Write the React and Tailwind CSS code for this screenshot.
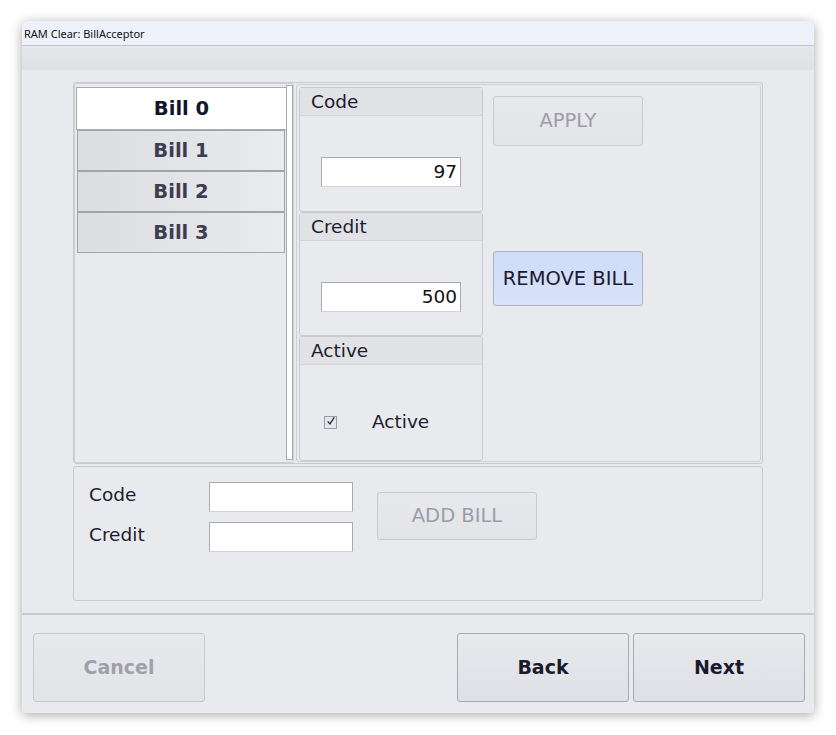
import React from "react";

const F = { fontFamily: '"DejaVu Sans", Verdana, sans-serif' };

function Group({ title, children }) {
  return (
    <div className="h-[125px] w-[184px] rounded-[3px] border border-[#c9cace] bg-[#e9eaee] flex flex-col">
      <div className="h-[28px] bg-[#e1e2e6] border-b border-[#d4d5d9] pl-[11px] text-[18.5px] leading-[28px] text-[#1c1c2e]">{title}</div>
      <div className="flex-1 relative">{children}</div>
    </div>
  );
}

function BillItem({ label, active }) {
  if (active) {
    return (
      <div className="h-[43px] bg-white border-l border-t border-b border-[#a9aaaf] flex items-center justify-center text-[19.5px] font-bold text-[#14142a]">{label}</div>
    );
  }
  return (
    <div className="mx-[1px] h-[41px] border border-[#a3a4aa] bg-gradient-to-r from-[#dcdde1] to-[#eaebee] flex items-center justify-center text-[19.5px] font-bold text-[#3d3d50]">{label}</div>
  );
}

export default function App() {
  return (
    <div className="w-[836px] h-[735px] bg-white pt-[21px] pl-[22px]" style={F}>
      <div className="w-[792px] h-[692px] rounded-t-[6px] rounded-b-[3px] bg-[#e9eaee] shadow-[0_2px_12px_rgba(0,0,0,0.35)] flex flex-col overflow-hidden">
        <div className="h-[25px] shrink-0 bg-[#eef1f9] border-b border-[#c3c5ca] pl-[2px] text-[11px] leading-[25px] text-[#111]" style={{ fontFamily: '"Noto Sans", "Open Sans", sans-serif' }}>
          RAM Clear: BillAcceptor
        </div>
        <div className="h-[24px] shrink-0 bg-gradient-to-b from-[#e6e7eb] to-[#e0e1e5]" />
        <div className="flex-1 flex flex-col pl-[51px] pt-[12px]">
          <div className="w-[690px] h-[382px] rounded-[3px] border border-[#c9cace] flex">
            <div className="w-[220px] h-[380px] rounded-[2px] border border-[#cfd0d4] flex pt-[3px] pb-[2px]">
              <div className="w-[211px] flex flex-col pl-[1px]">
                <BillItem label="Bill 0" active />
                <BillItem label="Bill 1" />
                <BillItem label="Bill 2" />
                <BillItem label="Bill 3" />
              </div>
              <div className="w-[7px] -mt-[2px] bg-white border border-[#a9aaaf]" />
            </div>
            <div className="ml-[2px] flex-1 mt-[1px] mb-[1px] mr-[1px] rounded-[3px] border border-[#cfd0d4] flex pl-[2px] pt-[2px] gap-[10px]">
              <div className="flex flex-col">
                <Group title="Code">
                  <div className="absolute left-[21px] top-[41px] w-[140px] h-[30px] bg-white border border-[#a9aaaf] border-b-[#d2d3d7] text-right pr-[3px] text-[18.5px] leading-[28px] text-[#111]">97</div>
                </Group>
                <Group title="Credit">
                  <div className="absolute left-[21px] top-[41px] w-[140px] h-[30px] bg-white border border-[#a9aaaf] border-b-[#d2d3d7] text-right pr-[3px] text-[18.5px] leading-[28px] text-[#111]">500</div>
                </Group>
                <Group title="Active">
                  <div className="absolute left-[24px] top-[43px] flex items-center">
                    <div className="w-[13px] h-[13px] border border-[#9c9ca6] bg-[#e4e5ea] flex items-center justify-center">
                      <svg width="12" height="12" viewBox="0 0 12 12" className="-mt-[3px] ml-[1px]">
                        <path d="M2 6.5 L4.8 9.5 L10 1.5" fill="none" stroke="#2a2a40" strokeWidth="1.6" />
                      </svg>
                    </div>
                    <span className="ml-[35px] text-[18.5px] text-[#1c1c2e]">Active</span>
                  </div>
                </Group>
              </div>
              <div className="flex flex-col pt-[9px]">
                <div className="w-[150px] h-[50px] rounded-[3px] border border-[#c9cace] bg-gradient-to-b from-[#e8e9ed] to-[#e3e4e8] flex items-center justify-center text-[19.5px] text-[#9d9da8]">APPLY</div>
                <div className="mt-[105px] w-[150px] h-[55px] rounded-[3px] border border-[#aeb3c2] bg-gradient-to-b from-[#cfdcf8] to-[#d8e2fa] flex items-center justify-center text-[19.5px] text-[#1a1a2e]">REMOVE BILL</div>
              </div>
            </div>
          </div>
          <div className="mt-[2px] w-[690px] h-[135px] rounded-[3px] border border-[#c9cace] relative">
            <div className="absolute left-[15px] top-[14px] text-[18.5px] text-[#1c1c2e]">Code</div>
            <div className="absolute left-[15px] top-[54px] text-[18.5px] text-[#1c1c2e]">Credit</div>
            <div className="absolute left-[135px] top-[15px] w-[144px] h-[30px] bg-white border border-[#a9aaaf] border-b-[#d2d3d7]" />
            <div className="absolute left-[135px] top-[55px] w-[144px] h-[30px] bg-white border border-[#a9aaaf] border-b-[#d2d3d7]" />
            <div className="absolute left-[303px] top-[25px] w-[160px] h-[48px] rounded-[3px] border border-[#c9cace] bg-gradient-to-b from-[#e8e9ed] to-[#e3e4e8] flex items-center justify-center text-[19.5px] text-[#9d9da8]">ADD BILL</div>
          </div>
        </div>
        <div className="h-[2px] shrink-0 bg-[#c8c9ce]" />
        <div className="h-[98px] shrink-0 flex items-start pt-[18px] pl-[11px] pr-[9px]">
          <div className="w-[172px] h-[69px] rounded-[3px] border border-[#c9cace] bg-gradient-to-b from-[#e8e9ed] to-[#e2e3e7] flex items-center justify-center text-[19px] font-bold text-[#a0a0aa]">Cancel</div>
          <div className="flex-1" />
          <div className="w-[172px] h-[69px] rounded-[3px] border border-[#a9aaaf] bg-gradient-to-b from-[#e8e9ed] to-[#dfe0e5] flex items-center justify-center text-[19px] font-bold text-[#1a1a2e]">Back</div>
          <div className="ml-[4px] w-[172px] h-[69px] rounded-[3px] border border-[#a9aaaf] bg-gradient-to-b from-[#e8e9ed] to-[#dfe0e5] flex items-center justify-center text-[19px] font-bold text-[#1a1a2e]">Next</div>
        </div>
      </div>
    </div>
  );
}
